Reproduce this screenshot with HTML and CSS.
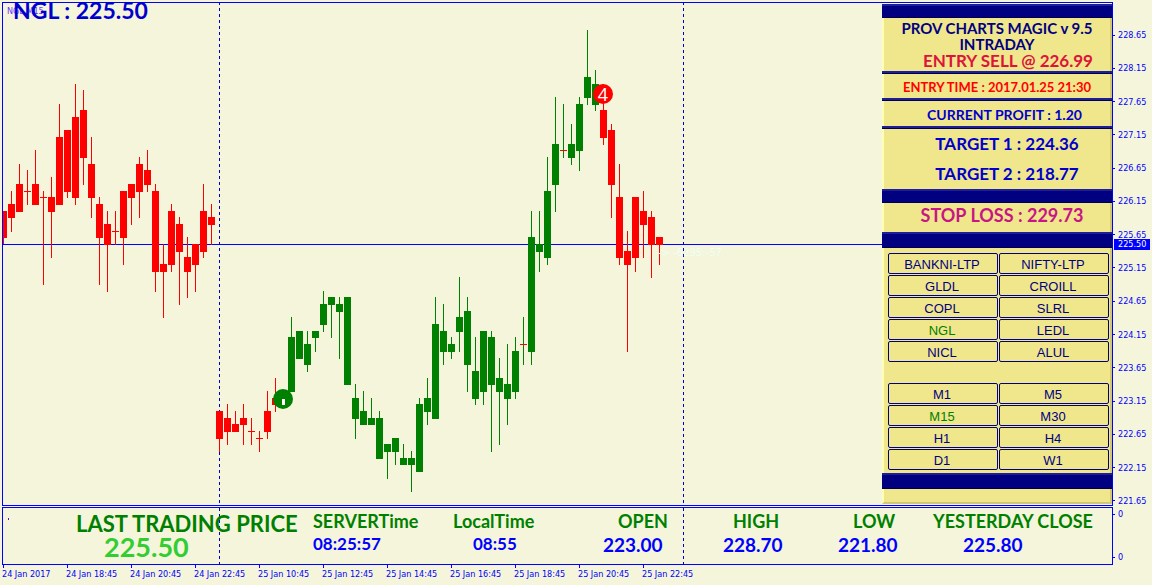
FILE: index.html
```html
<!DOCTYPE html>
<html lang="en">
<head>
<meta charset="utf-8">
<title>NGL,M15</title>
<link rel="stylesheet" href="styles.css">
</head>
<body>
<main class="terminal">
  <section class="chart" aria-label="NGL M15 chart">
    <svg class="plot" id="plot" aria-hidden="true">
      <g transform="translate(-3 -3)">
        <line class="session" x1="219.5" y1="2" x2="219.5" y2="101%"/>
        <line class="session" x1="683.5" y1="2" x2="683.5" y2="101%"/>
        <line class="price-line" x1="0" y1="244.5" x2="101%" y2="244.5"/>
        <g id="candles"></g>
        <circle cx="283" cy="399" r="10" fill="#008000"/>
        <rect x="282" y="399" width="3" height="6" fill="#fff"/>
        <circle cx="603" cy="94" r="10" fill="#f00"/>
        <text class="marker" x="603" y="101">4</text>
        <text class="countdown" x="658" y="256">-&gt; -6295:-57</text>
      </g>
    </svg>
    <span class="symbol">NGL,M15</span>
    <h1 class="quote">NGL : 225.50</h1>
    <aside class="panel">
      <div class="band"></div>
      <header class="intro">
        <h2 class="title">PROV CHARTS MAGIC v 9.5<br>INTRADAY</h2>
        <p class="entry">ENTRY SELL @ 226.99</p>
      </header>
      <div class="rule"></div>
      <p class="entry-time">ENTRY TIME : 2017.01.25 21:30</p>
      <div class="rule"></div>
      <p class="profit">CURRENT PROFIT : 1.20</p>
      <div class="rule"></div>
      <div class="targets"><p>TARGET 1 : 224.36</p><p>TARGET 2 : 218.77</p></div>
      <div class="band"></div>
      <p class="stop">STOP LOSS : 229.73</p>
      <div class="band tall"></div>
      <div class="buttons">
        <button>BANKNI-LTP</button><button>NIFTY-LTP</button>
        <button>GLDL</button><button>CROILL</button>
        <button>COPL</button><button>SLRL</button>
        <button class="active">NGL</button><button>LEDL</button>
        <button>NICL</button><button>ALUL</button>
      </div>
      <div class="buttons frames">
        <button>M1</button><button>M5</button>
        <button class="active">M15</button><button>M30</button>
        <button>H1</button><button>H4</button>
        <button>D1</button><button>W1</button>
      </div>
      <div class="band tall"></div>
      <div class="foot"></div>
    </aside>
  </section>
  <div class="prices">
    <span>228.65</span><span>228.15</span><span>227.65</span><span>227.15</span><span>226.65</span>
    <span>226.15</span><span>225.65</span><span>225.15</span><span>224.65</span><span>224.15</span>
    <span>223.65</span><span>223.15</span><span>222.65</span><span>222.15</span><span>221.65</span>
    <strong class="last">225.50</strong>
  </div>
  <section class="stats" aria-label="Market data">
    <svg class="plot" aria-hidden="true">
      <g transform="translate(-3 0)">
        <line class="session" x1="219.5" y1="0" x2="219.5" y2="100%"/>
        <line class="session" x1="683.5" y1="0" x2="683.5" y2="100%"/>
        <rect x="8" y="10" width="1" height="2" fill="#6a00ff"/>
      </g>
    </svg>
    <dl class="figures">
      <div class="ltp"><dt>LAST TRADING PRICE</dt><dd>225.50</dd></div>
      <div class="clock"><dt>SERVERTime</dt><dd>08:25:57</dd></div>
      <div class="clock local"><dt>LocalTime</dt><dd>08:55</dd></div>
      <div class="open"><dt>OPEN</dt><dd>223.00</dd></div>
      <div class="high"><dt>HIGH</dt><dd>228.70</dd></div>
      <div class="low"><dt>LOW</dt><dd>221.80</dd></div>
      <div class="close"><dt>YESTERDAY CLOSE</dt><dd>225.80</dd></div>
    </dl>
  </section>
  <div class="zeros"><span>0</span><span>0</span></div>
  <div class="times">
    <span>24 Jan 2017</span><span>24 Jan 18:45</span><span>24 Jan 20:45</span><span>24 Jan 22:45</span>
    <span>25 Jan 10:45</span><span>25 Jan 12:45</span><span>25 Jan 14:45</span><span>25 Jan 16:45</span>
    <span>25 Jan 18:45</span><span>25 Jan 20:45</span><span>25 Jan 22:45</span>
  </div>
</main>
<script src="chart.js"></script>
</body>
</html>
```

FILE: styles.css
```css
* { box-sizing: border-box; }
body {
  margin: 0;
  background: #f5f5dc;
  color: #00f;
  font-family: "DejaVu Sans Condensed", "Noto Sans", sans-serif;
  font-size: 9px;
}
h1, h2, p, dl, dt, dd { margin: 0; }
.terminal {
  display: grid;
  grid-template-columns: minmax(0, 1fr) 39px;
  grid-template-rows: minmax(504px, 1fr) auto 20px;
  min-height: 100vh;
  padding: 2px 0 0 2px;
}
.chart, .stats { border: 1px solid #00f; display: grid; grid-template-columns: minmax(0, 1fr); }
.plot { grid-area: 1 / 1; width: 100%; height: 0; min-height: 100%; overflow: hidden; shape-rendering: crispEdges; }
.plot circle { shape-rendering: geometricPrecision; }
.session { stroke: #0000cd; stroke-dasharray: 3 3; }
.price-line { stroke: #00f; }
.up { fill: #008000; }
.down { fill: #f00; }
.marker { fill: #fff; font: 18px "Open Sans", sans-serif; text-anchor: middle; }
.countdown { fill: #f0fff0; font: 10px "DejaVu Sans", sans-serif; }
.symbol, .quote { grid-area: 1 / 1; align-self: start; justify-self: start; }
.symbol { padding: 2px 0 0 4px; line-height: 12px; color: #6a3cff; }
.quote {
  padding-left: 10px;
  color: #0000cd;
  font: bold 23px/14px Lato, sans-serif;
}
.panel {
  grid-area: 1 / 1;
  justify-self: end;
  display: flex;
  flex-direction: column;
  width: 230px;
  margin: 1px 0;
  background: #f0e68c;
  border: solid;
  border-width: 0 2px 2px;
  border-color: #d1c871 #d1c871 #d1c871 #ffffb4;
  font-family: Lato, sans-serif;
  font-weight: bold;
  text-align: center;
}
.band, .rule { margin: 0 -2px; flex: none; border-top: 2px solid #1e1e9b; border-bottom: 1px solid #000050; }
.band { height: 14px; background: #000080; }
.tall { height: 16px; }
.rule { height: 3px; }
.intro { height: 53px; padding-top: 2px; color: #000080; }
.title { font-size: 15px; line-height: 16px; }
.entry { padding-right: 17px; color: #dc143c; font-size: 17px; line-height: 18px; text-align: right; }
.entry-time { padding-top: 2px; color: #f00; font-size: 13px; line-height: 22px; }
.profit { padding: 2px 0 0 15px; color: #0000cd; font-size: 14px; line-height: 23px; }
.targets { padding-left: 20px; color: #0000cd; font-size: 17px; line-height: 30px; }
.stop { padding: 0 0 5px 10px; color: #c71585; font-size: 18px; line-height: 24px; }
.buttons { display: grid; grid-template-columns: 1fr 1fr; grid-auto-rows: 21px; gap: 1px; padding: 5px 1px 0 4px; }
.frames { padding: 21px 1px 3px 4px; }
.buttons button {
  padding: 1px 2px 0 0;
  border: 1px solid #000080;
  border-radius: 2px;
  background: none;
  color: #000080;
  font: 13px "Liberation Sans", sans-serif;
}
.buttons .active { color: #008000; }
.foot { flex: 1; min-height: 12px; }
.prices { position: relative; display: flex; flex-direction: column; justify-content: space-between; margin-bottom: -2px; padding-top: 26px; line-height: 14px; }
.prices span, .zeros span { display: flex; align-items: center; gap: 3px; }
.prices span::before, .zeros span::before { content: ""; width: 2px; height: 1px; background: #00f; }
.last { position: absolute; left: 1px; top: 237px; width: 36px; padding-left: 4px; background: #00f; color: #fff; font-weight: normal; line-height: 11px; }
.stats { margin-top: 1px; }
.figures {
  grid-area: 1 / 1;
  display: grid;
  grid-template-columns: 305fr 140fr 150fr 120fr 115fr 95fr 184fr;
  height: 56px;
  padding-top: 2px;
  font: bold 19px/24px Lato, sans-serif;
  white-space: nowrap;
}
.figures dt { padding-left: 5px; color: #008000; font-size: 18px; line-height: 23px; }
.figures dd { padding-left: 5px; }
.figures .ltp dt { padding-left: 73px; font-size: 22px; line-height: 28px; }
.figures .ltp dd { padding-left: 101px; color: #32cd32; font-size: 27px; line-height: 18px; }
.figures .clock dd { font-size: 17px; line-height: 22px; }
.figures .local dd { padding-left: 25px; }
.figures .open dt, .figures .low dt { padding-left: 20px; }
.figures .high dt { padding-left: 15px; }
.figures .close dd { padding-left: 35px; }
.zeros { display: flex; flex-direction: column; justify-content: space-between; padding: 2px 0; line-height: 12px; }
.times { grid-column: 1 / -1; display: flex; }
.times span { flex: none; width: 64px; line-height: 12px; white-space: nowrap; }
.times span::before { content: ""; display: block; width: 1px; height: 3px; margin-left: 1px; background: #00f; }
```

FILE: chart.js
```js
// Each candle: [high, body top, body bottom, low], 8px apart from x = 3.
const falling = [
  [211,211,238,244],[191,204,218,232],[164,184,212,212],[170,191,192,205],[150,184,205,205],
  [191,197,198,285],[177,197,212,258],[104,137,205,205],[130,130,192,198],[84,117,198,205],
  [90,110,158,185],[137,164,198,218],[197,204,238,285],[211,224,245,292],[211,231,232,245],
  [191,191,238,265],[184,184,198,225],[157,164,192,218],[150,170,185,192],[184,191,272,292],
  [244,264,272,318],[204,211,265,272],[217,224,252,305],[237,257,272,298],[244,244,265,292],
  [184,211,252,258],[204,217,225,245],[411,411,439,452],[404,418,432,445],[411,424,432,432],
  [404,418,425,445],[418,431,432,445],[431,438,439,452],[391,411,432,439],[378,398,405,412]
];
const rising = [
  [317,337,392,392],[331,331,359,359],[331,344,365,372],[331,331,338,352],[291,304,325,332],
  [297,297,305,338],[297,304,312,359],[297,297,385,385],[384,398,419,439],[391,411,425,425],
  [398,418,425,425],[411,418,459,459],[444,444,452,479],[438,438,452,465],[444,458,465,465],
  [451,458,465,492],[398,404,472,472],[378,398,412,425],[297,324,419,419],[304,331,352,365],
  [337,344,352,359],[277,317,332,352],[297,311,365,392],[337,371,399,405],[331,331,392,405],
  [331,337,385,452],[358,378,392,445],[344,384,399,425],[337,351,392,399],[317,344,345,365],
  [211,237,352,365],[211,244,252,272],[157,191,258,265],[97,144,185,212],[104,150,151,158],
  [124,144,158,165],[97,104,151,171],[30,77,98,105],[70,84,105,111]
];
const reversal = [
  [84,110,138,145],[124,130,185,218],[164,197,258,265],[231,251,265,352],[197,197,258,272],
  [191,211,225,258],[211,217,245,278],[237,237,245,265]
];

const layer = document.getElementById("candles");

function rect(x, y, width, height, kind) {
  const el = document.createElementNS("http://www.w3.org/2000/svg", "rect");
  Object.entries({ x, y, width, height, class: kind }).forEach(([k, v]) => el.setAttribute(k, v));
  layer.append(el);
}

function draw(candles, start, kind) {
  candles.forEach(([high, top, bottom, low], i) => {
    const x = start + i * 8;
    rect(x, high, 1, low - high, kind);
    rect(x - 3, top, 7, bottom - top, bottom - top === 1 ? "down" : kind);
  });
}

draw(falling, 3, "down");
draw(rising, 291, "up");
draw(reversal, 603, "down");
```
